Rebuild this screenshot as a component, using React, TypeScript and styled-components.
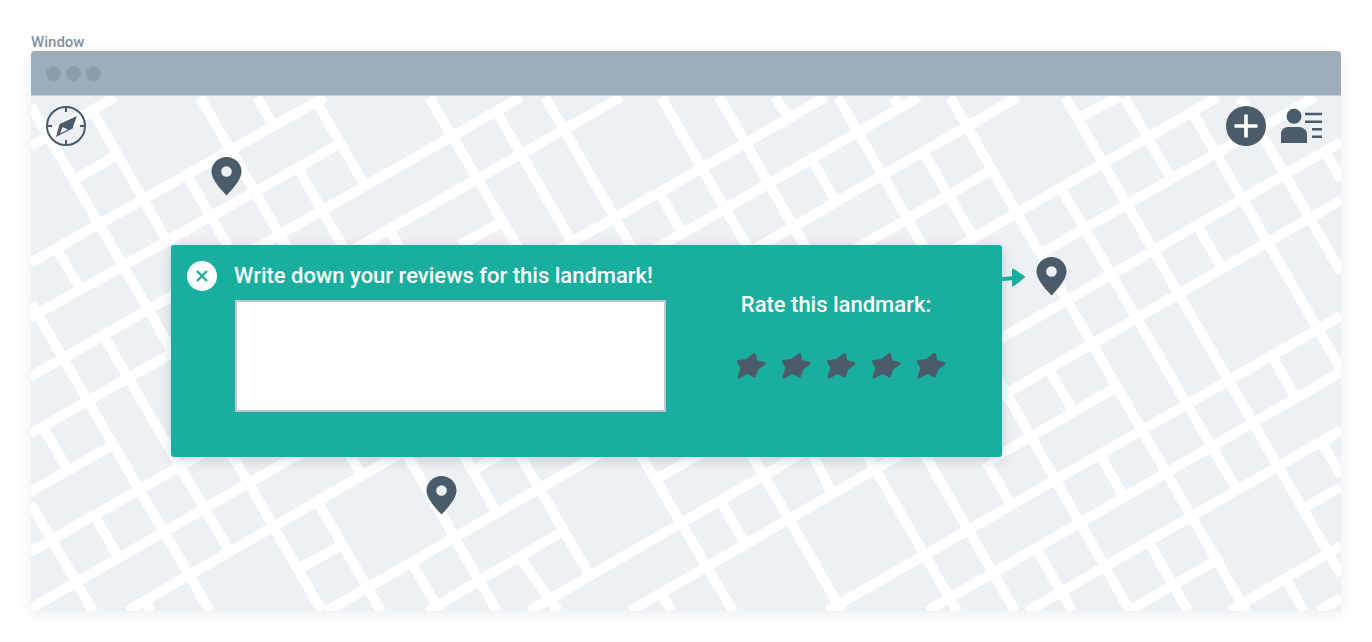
import React from 'react';
import styled, { createGlobalStyle } from 'styled-components';

const GlobalStyle = createGlobalStyle`
  html, body {
    margin: 0;
    padding: 0;
    background: #fff;
    font-family: Roboto, "Open Sans", sans-serif;
  }
`;

const Page = styled.div`
  width: 1372px;
  height: 642px;
  padding: 33px 31px 0;
  box-sizing: border-box;
  overflow: hidden;
`;

const WindowLabel = styled.div`
  height: 18px;
  line-height: 18px;
  font-size: 15px;
  font-weight: 500;
  color: #8291a0;
`;

const WindowFrame = styled.div`
  width: 1310px;
  border-radius: 4px 4px 2px 2px;
  box-shadow: 0 4px 14px rgba(60, 80, 100, 0.09);
`;

const TitleBar = styled.div`
  height: 45px;
  display: flex;
  align-items: center;
  gap: 5px;
  padding: 0 0 0 15px;
  box-sizing: border-box;
  background: #9dadba;
  border-radius: 4px 4px 0 0;
  border-bottom: 1px solid #c6d2dd;
`;

const Dot = styled.span`
  width: 15px;
  height: 15px;
  border-radius: 50%;
  background: #8b9dab;
`;

const MapArea = styled.div`
  position: relative;
  height: 515px;
  background: #edf0f5;
  overflow: hidden;
`;

const StreetLayer = styled.svg`
  position: absolute;
  inset: 0;
  width: 100%;
  height: 100%;
`;

const MapTools = styled.div`
  position: relative;
  display: flex;
  justify-content: space-between;
  align-items: flex-start;
  padding: 9px 19px 0 14px;
`;

const ToolGroup = styled.div`
  display: flex;
  align-items: flex-start;
  gap: 14px;
`;

const PlusIcon = styled.svg`
  width: 40px;
  height: 40px;
  margin-top: 1px;
`;

const Pin = styled.svg<{ $x: number; $y: number }>`
  position: absolute;
  left: ${p => p.$x}px;
  top: ${p => p.$y}px;
  width: 31px;
  height: 40px;
`;

const ReviewPanel = styled.div`
  position: absolute;
  left: 140px;
  top: 149px;
  width: 831px;
  height: 212px;
  display: flex;
  box-sizing: border-box;
  padding: 16px 0 0 16px;
  background: #1aae9f;
  border-radius: 3px;
  box-shadow: 0 3px 12px rgba(60, 80, 100, 0.22);
`;

const CloseButton = styled.button`
  flex: none;
  width: 30px;
  height: 30px;
  padding: 0;
  display: flex;
  align-items: center;
  justify-content: center;
  border: none;
  border-radius: 50%;
  background: #fff;
  color: #1aae9f;
`;

const ReviewColumn = styled.div`
  width: 432px;
  margin-left: 17px;
`;

const PanelHeading = styled.div`
  font-size: 22px;
  font-weight: 500;
  line-height: 30px;
  color: #fff;
  white-space: nowrap;
`;

const ReviewBox = styled.textarea`
  display: block;
  width: 431px;
  height: 112px;
  margin: 9px 0 0 1px;
  padding: 0;
  box-sizing: border-box;
  background: #fff;
  border: 2px solid #bcc9d4;
  border-radius: 0;
  resize: none;
  outline: none;
`;

const RatingColumn = styled.div`
  width: 290px;
  margin: 29px 0 0 25px;
  display: flex;
  flex-direction: column;
  align-items: center;
`;

const StarRow = styled.div`
  display: flex;
  gap: 15px;
  margin-top: 32px;
  margin-left: 10px;
`;

const ArrowMark = styled.svg`
  position: absolute;
  left: 971px;
  top: 170px;
  width: 25px;
  height: 22px;
`;

const INK = '#4a5b6a';

const STREETS: number[][] = [
  [31, 146, 115, 97], [30, 263, 325, 97], [30, 318, 338, 145], [30, 377, 521, 97],
  [30, 434, 621, 97], [30, 492, 113, 445], [30, 552, 826, 97], [30, 609, 919, 97],
  [127, 611, 1018, 97], [327, 611, 1218, 97], [428, 611, 565, 530], [653, 481, 705, 451],
  [1045, 251, 1315, 97], [529, 611, 1341, 142], [630, 611, 1341, 200], [827, 611, 1341, 316],
  [927, 611, 1341, 372], [1028, 611, 1341, 430], [1128, 611, 1222, 557], [1302, 509, 1341, 487],
  [1230, 611, 1341, 546], [1318, 611, 1341, 598], [300, 568, 342, 545], [472, 471, 990, 171],
  [1078, 118, 1120, 96], [460, 245, 502, 222], [990, 460, 1115, 388], [74, 180, 117, 155],

  [31, 106, 322, 611], [92, 110, 167, 241], [31, 303, 210, 611], [103, 335, 230, 552],
  [31, 504, 93, 611], [43, 427, 68, 470], [93, 513, 119, 558], [146, 602, 151, 611],
  [56, 248, 81, 290], [257, 97, 273, 125], [200, 97, 497, 611], [186, 174, 362, 476],
  [297, 167, 497, 513], [316, 101, 365, 186], [389, 229, 590, 576], [520, 558, 558, 611],
  [496, 111, 571, 240], [429, 97, 733, 611], [545, 97, 842, 611], [661, 97, 957, 611],
  [719, 97, 1015, 611], [658, 190, 682, 233], [810, 450, 832, 493], [775, 97, 789, 118],
  [811, 158, 836, 202], [838, 97, 1130, 611], [893, 97, 900, 108], [923, 152, 975, 240],
  [950, 97, 1246, 611], [1062, 190, 1237, 490], [1065, 97, 1341, 575], [1124, 97, 1171, 178],
  [1272, 356, 1296, 398], [1197, 225, 1222, 268], [1192, 112, 1341, 369], [1240, 97, 1341, 272],
  [1327, 155, 1341, 180], [1321, 441, 1341, 476], [1285, 578, 1304, 611], [1148, 541, 1188, 611],
  [1100, 455, 1124, 497], [1048, 369, 1074, 412], [1036, 548, 1072, 611], [986, 462, 1012, 506],
  [720, 500, 745, 543], [660, 592, 672, 611], [317, 501, 381, 611], [411, 562, 440, 611],
];

const Streets = () => (
  <StreetLayer viewBox="31 96 1310 515">
    {STREETS.map(([x1, y1, x2, y2], i) => (
      <line key={i} x1={x1} y1={y1} x2={x2} y2={y2} stroke="#fff" strokeWidth={10} />
    ))}
  </StreetLayer>
);

const CompassIcon = () => (
  <svg width="42" height="42" viewBox="0 0 42 42">
    <circle cx="21" cy="21" r="19" fill="none" stroke={INK} strokeWidth="2" />
    <path d="M21 2v5M21 35v5M2 21h5M35 21h5" stroke={INK} strokeWidth="2" />
    <path d="M32 11 14.500 19 11 32l16.500-8.500z" fill={INK} />
    <path d="M17.500 22 23 24.500 15 28.500z" fill="#edf0f5" />
  </svg>
);

const AddIcon = () => (
  <PlusIcon viewBox="0 0 40 40">
    <circle cx="20" cy="20" r="20" fill={INK} />
    <path d="M20 8.500v23M8.500 20h23" stroke="#fff" strokeWidth="3.600" />
  </PlusIcon>
);

const ContactIcon = () => (
  <svg width="42" height="40" viewBox="0 0 42 40">
    <circle cx="14" cy="11.300" r="7.500" fill={INK} />
    <path d="M1 38V29c0-4 3-7 7-7h11c4 0 8 3 8 7v9z" fill={INK} />
    <path d="M25 9h17M25 16.700h17M32 24.300h10M32 31.700h10" stroke={INK} strokeWidth="2.400" />
  </svg>
);

const PinIcon = ({ x, y }: { x: number; y: number }) => (
  <Pin $x={x} $y={y} viewBox="0 0 31 40">
    <path
      d="M15.500 1C7.300 1 .5 7.500.5 15.500c0 6.500 5.500 14 15 24 9.500-10 15-17.500 15-24C30.500 7.500 23.700 1 15.500 1z"
      fill={INK}
    />
    <circle cx="15.500" cy="15.500" r="5.300" fill="#edf0f5" />
  </Pin>
);

const CloseIcon = () => (
  <svg width="14" height="14" viewBox="0 0 14 14">
    <path d="M2 2 12 12M12 2 2 12" stroke="currentColor" strokeWidth="2.400" />
  </svg>
);

const StarIcon = () => (
  <svg width="30" height="27" viewBox="0 0 30 27">
    <path
      d="M18.500 2.500 20 9.500 28 11.500 21 16.500 18.500 24 11.500 20.500 3 25 6 16 2.500 9.500 11 8.500z"
      fill={INK}
      stroke={INK}
      strokeWidth="3"
      strokeLinejoin="round"
    />
  </svg>
);

const App: React.FC = () => (
  <>
    <GlobalStyle />
    <Page>
      <WindowLabel>Window</WindowLabel>
      <WindowFrame>
        <TitleBar>
          <Dot />
          <Dot />
          <Dot />
        </TitleBar>
        <MapArea>
          <Streets />
          <MapTools>
            <CompassIcon />
            <ToolGroup>
              <AddIcon />
              <ContactIcon />
            </ToolGroup>
          </MapTools>
          <PinIcon x={180} y={60} />
          <PinIcon x={1005} y={160} />
          <PinIcon x={395} y={379} />
          <ReviewPanel>
            <CloseButton aria-label="Close">
              <CloseIcon />
            </CloseButton>
            <ReviewColumn>
              <PanelHeading>Write down your reviews for this landmark!</PanelHeading>
              <ReviewBox />
            </ReviewColumn>
            <RatingColumn>
              <PanelHeading>Rate this landmark:</PanelHeading>
              <StarRow>
                {[0, 1, 2, 3, 4].map(i => (
                  <StarIcon key={i} />
                ))}
              </StarRow>
            </RatingColumn>
          </ReviewPanel>
          <ArrowMark viewBox="0 0 25 22">
            <path d="M0 13 13 12" stroke="#1aae9f" strokeWidth="4" />
            <path d="M11 3.500 22 11 11 19.500z" fill="#1aae9f" stroke="#1aae9f" strokeWidth="2" strokeLinejoin="round" />
          </ArrowMark>
        </MapArea>
      </WindowFrame>
    </Page>
  </>
);

export default App;
